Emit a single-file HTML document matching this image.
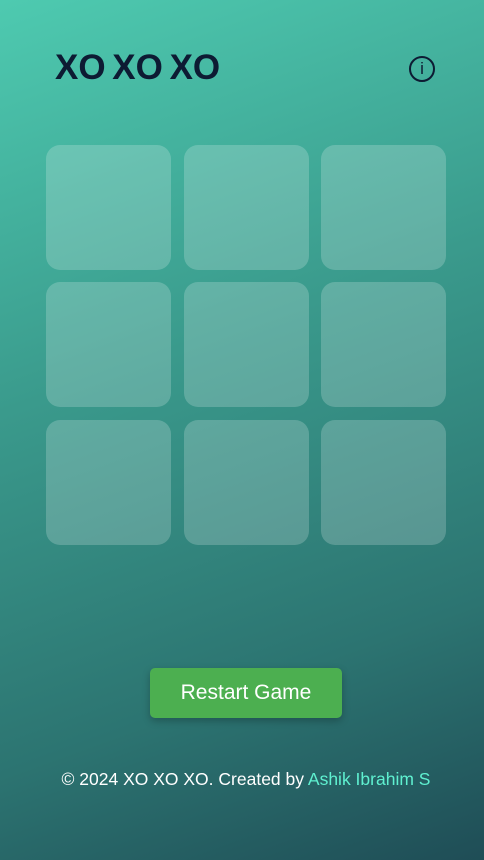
<!DOCTYPE html>
<html><head><style>
html,body{margin:0;padding:0}
body{width:484px;height:860px;background:linear-gradient(160deg,#4ecab0 0%,#3a9a8c 40%,#2c7471 75%,#1f4d56 100%);font-family:"Liberation Sans",sans-serif;position:relative;overflow:hidden}
h1{position:absolute;left:55px;top:48px;margin:0;font-size:35px;font-weight:bold;color:#0d1b33;letter-spacing:0px;word-spacing:-3px}
.info{position:absolute;left:409px;top:56px;width:26px;height:26px;border:2px solid #0d1b33;border-radius:50%;box-sizing:border-box;color:#0d1b33;font-size:17px;text-align:center;line-height:22px}
.c{position:absolute;width:125px;height:125px;border-radius:14px;background:rgba(255,255,255,0.2)}
.btn{position:absolute;left:150px;top:668px;width:192px;height:50px;background:#4caf50;border-radius:5px;color:#fff;font-size:21px;text-align:center;line-height:50px;box-shadow:0 3px 8px rgba(0,0,0,0.25)}
.f{position:absolute;left:0;width:492px;top:769px;text-align:center;color:#fff;font-size:17.5px}
.f span{color:#5ff0d0}
</style></head><body>
<h1>XO XO XO</h1>
<div class="info">i</div>
<div class="c" style="left:46px;top:145px"></div><div class="c" style="left:184px;top:145px"></div><div class="c" style="left:321px;top:145px"></div>
<div class="c" style="left:46px;top:282px"></div><div class="c" style="left:184px;top:282px"></div><div class="c" style="left:321px;top:282px"></div>
<div class="c" style="left:46px;top:420px"></div><div class="c" style="left:184px;top:420px"></div><div class="c" style="left:321px;top:420px"></div>
<div class="btn">Restart Game</div>
<div class="f">© 2024 XO XO XO. Created by <span>Ashik Ibrahim S</span></div>
</body></html>
